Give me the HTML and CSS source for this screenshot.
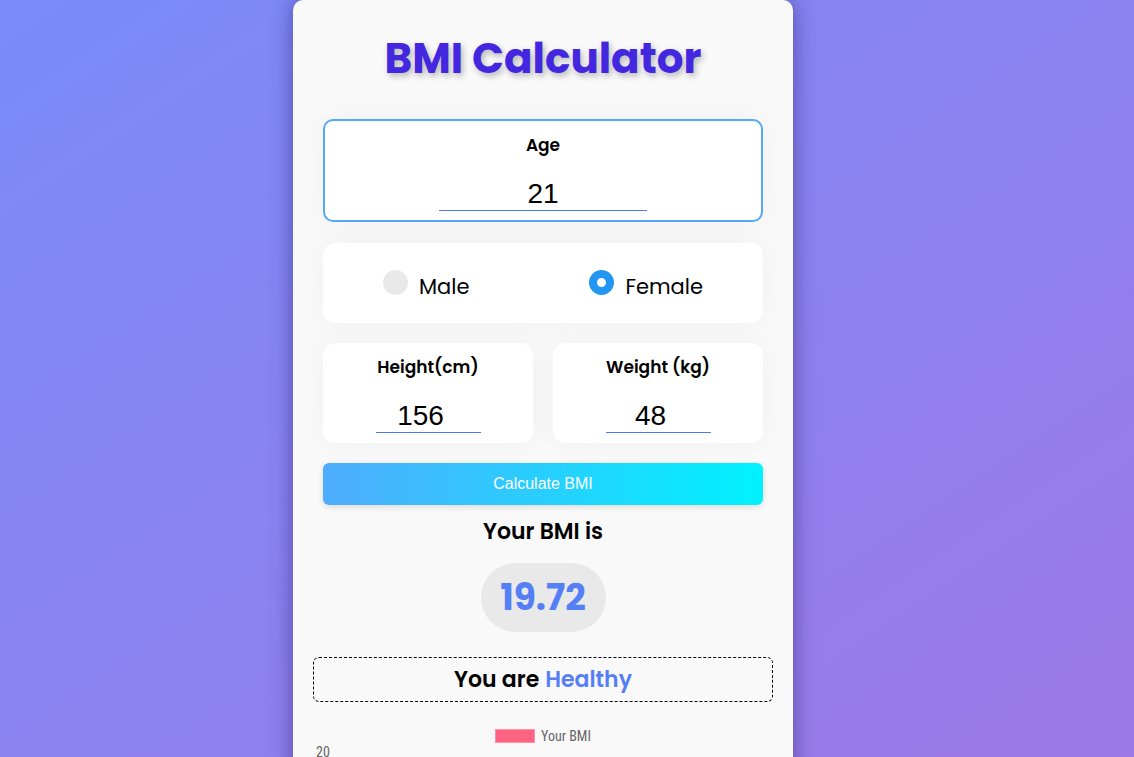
FILE: index.html
```html
<!DOCTYPE html>
<html>
<head>
<meta charset="utf-8">
<link rel="stylesheet" href="styles.css">
</head>
<body>
<div class="card">
  <h1 class="title">BMI Calculator</h1>
  <div class="box age-box">
    <label class="field-label">Age</label>
    <div class="num-input wide">21</div>
  </div>
  <div class="box gender-box">
    <label class="radio"><span class="dot"></span><span>Male</span></label>
    <label class="radio"><span class="dot checked"></span><span>Female</span></label>
  </div>
  <div class="pair">
    <div class="box small-box">
      <label class="field-label">Height(cm)</label>
      <div class="num-input narrow">156</div>
    </div>
    <div class="box small-box">
      <label class="field-label">Weight (kg)</label>
      <div class="num-input narrow">48</div>
    </div>
  </div>
  <button class="calc-btn">Calculate BMI</button>
  <div class="result-label">Your BMI is</div>
  <div class="pill">19.72</div>
  <div class="status">You are <span class="healthy">Healthy</span></div>
  <div class="chart">
    <div class="legend"><span class="swatch"></span><span>Your BMI</span></div>
    <div class="axis">20</div>
  </div>
</div>
</body>
</html>
```

FILE: styles.css
```css
html, body {
  margin: 0;
  padding: 0;
  height: 100%;
  overflow: hidden;
}
body {
  background: linear-gradient(to bottom right, #7a8bfa, #9c79e6);
  font-family: "Poppins", "Open Sans", "Noto Sans", sans-serif;
  display: flex;
  justify-content: center;
  align-items: flex-start;
  padding-right: 48px;
  box-sizing: border-box;
}
.card {
  width: 500px;
  flex-shrink: 0;
  box-sizing: border-box;
  background: #f9f9f9;
  border-radius: 10px;
  padding: 0 30px;
  box-shadow: 0 0 22px rgba(40, 30, 110, 0.55);
  display: flex;
  flex-direction: column;
  align-items: center;
  min-height: 800px;
}
.title {
  margin: 32px 0 0;
  font-size: 42px;
  line-height: 54px;
  font-weight: 700;
  color: #4327e0;
  text-shadow: 2px 3px 6px rgba(0, 0, 0, 0.28);
}
.box {
  background: #fff;
  border-radius: 12px;
  box-sizing: border-box;
  box-shadow: 0 0 30px rgba(0, 0, 0, 0.04);
}
.age-box {
  width: 440px;
  height: 103px;
  margin-top: 33px;
  border: 2px solid #55a8f5;
  border-radius: 10px;
  display: flex;
  flex-direction: column;
  align-items: center;
  padding-top: 12px;
}
.field-label {
  font-size: 17px;
  font-weight: 600;
  line-height: 24px;
  color: #000;
}
.num-input {
  font-family: "Liberation Sans", Arial, sans-serif;
  font-size: 28px;
  line-height: 32px;
  text-align: center;
  border-bottom: 1px solid #4c7be8;
  color: #000;
  margin-top: 21px;
  box-sizing: border-box;
}
.wide { width: 208px; }
.narrow { width: 105px; padding-right: 15px; }
.gender-box {
  width: 440px;
  height: 80px;
  margin-top: 21px;
  display: flex;
  justify-content: space-around;
  align-items: center;
}
.radio {
  display: flex;
  align-items: center;
  gap: 11px;
  font-size: 21px;
  color: #000;
  padding-top: 6px;
}
.dot {
  width: 25px;
  height: 25px;
  border-radius: 50%;
  background: #e9e9e9;
  box-sizing: border-box;
  margin-top: -8px;
}
.dot.checked {
  background: #fff;
  border: 8px solid #2196f3;
}
.pair {
  width: 440px;
  margin-top: 20px;
  display: flex;
  gap: 20px;
}
.small-box {
  flex: 1;
  height: 100px;
  display: flex;
  flex-direction: column;
  align-items: center;
  padding-top: 12px;
}
.calc-btn {
  width: 440px;
  height: 42px;
  margin-top: 20px;
  border: none;
  border-radius: 6px;
  background: linear-gradient(to right, #4facfe, #00f2fe);
  color: #fff;
  font-family: "Liberation Sans", Arial, sans-serif;
  font-size: 16px;
  box-shadow: 0 2px 6px rgba(0, 0, 0, 0.12);
}
.result-label {
  margin-top: 13px;
  font-size: 22px;
  font-weight: 600;
  line-height: 28px;
  color: #000;
}
.pill {
  margin-top: 17px;
  width: 125px;
  height: 69px;
  border-radius: 35px;
  background: #e9e9e9;
  display: flex;
  align-items: center;
  justify-content: center;
  font-size: 36px;
  font-weight: 700;
  color: #5580f5;
}
.status {
  margin-top: 25px;
  width: 460px;
  height: 45px;
  box-sizing: border-box;
  border: 1px dashed #000;
  border-radius: 6px;
  display: flex;
  align-items: center;
  justify-content: center;
  font-size: 22px;
  font-weight: 600;
  color: #000;
}
.healthy { color: #5580f5; margin-left: 6px; }
.chart {
  width: 460px;
  margin-top: 26px;
  font-family: "Liberation Sans Narrow", "Roboto Condensed", "Liberation Sans", Arial, sans-serif;
  color: #666;
  font-size: 14px;
}
.legend {
  display: flex;
  justify-content: center;
  align-items: center;
  gap: 6px;
}
.swatch {
  width: 40px;
  height: 14px;
  background: #ff6384;
  box-sizing: border-box;
  border: 1px solid #ff8fa6;
}
.axis {
  margin-top: 0;
  margin-left: 3px;
}
```
